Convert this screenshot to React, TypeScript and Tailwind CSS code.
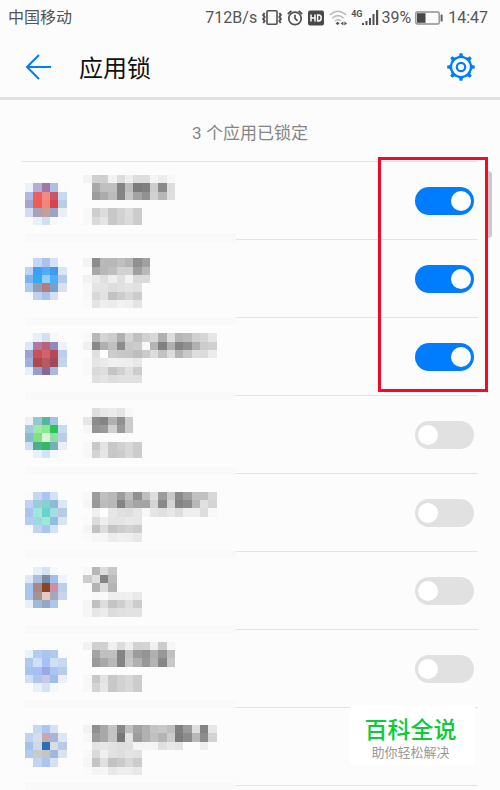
import React from "react";

const CELL = 25 / 3;
const LIST_TOP = 162;
const ROW_HEIGHT = 78;

type AppRow = {
  label: string;
  locked: boolean;
  iconRow: number;
  textRow: number;
  bandRow: number;
  icon: string[];
  text: string[];
};

// Censored rows: icons are hex colours, captions are grey levels, "--" is an empty cell.
const apps: AppRow[] = [
  {
    label: "应用 1", locked: true, iconRow: 22, textRow: 21, bandRow: 28,
    icon: [
      "ecf2fa b2aed4 a3779f aebfe6 fafbfd",
      "b0bae0 ea6060 f08c86 c95565 c8daf0",
      "a4a6d0 f05a50 f0857a d8444a bacde6",
      "cddcf2 a8a2b8 c49e98 9aa4c8 eaeff5",
      "-- e8f0fa d0e0f4 f6f9fc --",
    ],
    text: [
      "f3 d0 d0 f2 dd ee dd dd f5 ec f8",
      "-- a8 c0 c0 84 bc 7c 80 cc 8a dd",
      "-- 9c ab ba 84 c6 a4 92 d2 b8 de",
      "",
      "f8 ce dc c8 d2 dc cc",
      "f8 da e4 c8 d2 da cc",
    ],
  },
  {
    label: "应用 2", locked: true, iconRow: 31, textRow: 31, bandRow: 38,
    icon: [
      "fafbfd c5d7f2 aac3ea d6e2f4 --",
      "bed3f2 3f9ff4 52aaf8 4698ea dae5f5",
      "7db2ea 2eacf6 8fd0fa 4aaff4 b6cae6",
      "b0c9ee 949bb2 b07c80 7c9fca d9e1ee",
      "fafbfd bfd2f0 abc3ea d4e0f3 --",
    ],
    text: [
      "f3 8c b8 b8 c0 b6 90 a0",
      "-- a8 b8 be d2 d2 a0 b8",
      "f2 eb df ee e0 f3 da da",
      "f8 e4 e4 dd e1 e4 e1",
      "f8 d8 e2 c2 cc d8 cc",
      "fa e4 ee ec f2 f0 e4",
    ],
  },
  {
    label: "应用 3", locked: true, iconRow: 40, textRow: 40, bandRow: 47,
    icon: [
      "-- e8eff9 d2e1f4 f5f8fc --",
      "dce7f5 b07a9e b9607c 9388b6 eef2f8",
      "9da3d0 ca5058 d0646a b84656 bacfeb",
      "a2b1dc b04852 b45a60 9c4a5e c6d4e8",
      "e8effa 969eca 866a96 acb9de --",
    ],
    text: [
      "f9 b8 d4 cc b0 d4 c0 d0 d8 b0 dd b6 bc d0 d6 e6",
      "f0 88 b0 c0 8c c8 cc f8 b4 80 b0 84 90 b0 cc d0",
      "-- e0 fe cc c8 c6 be ca dc c2 dc b4 c8 dd dc ec",
      "f9 e6 ea f0 ee ee e8",
      "f9 da de c4 d0 e0 cc",
      "-- e0 e4 dd e0 e0 e0",
    ],
  },
  {
    label: "应用 4", locked: false, iconRow: 50, textRow: 49, bandRow: 56,
    icon: [
      "ecf2f8 96c8d0 58b49c a4c6e2 fafbfd",
      "a4c8e0 9ee8a8 8ae890 2cc458 c9daf0",
      "88bccc 80e088 d6f5d8 92dca8 bacde8",
      "d0def5 4cb08c 34b860 74b2b8 ebeff5",
      "-- e8f0f9 d3e2f4 f5f8fb --",
    ],
    text: [
      "-- de e8 eb e4 f7",
      "e6 8c 84 b0 90 cc",
      "f6 94 9a d0 9a cc",
      "",
      "f8 c8 e4 c8 d0 d8 cc",
      "f7 d4 e6 c8 cc d8 cc",
    ],
  },
  {
    label: "应用 5", locked: false, iconRow: 59, textRow: 59, bandRow: 66,
    icon: [
      "fafbfd c4d6f3 aac5ef d5e1f4 --",
      "c0d4f2 98ccd8 88d0d0 8cbcd8 dce6f4",
      "a9c4ef a0e6dc 66d4cc a4dee0 b8cbe6",
      "b4ccf1 a0d8e0 a2e6d8 90bedc dbe3ef",
      "fafbfd c0d3f2 aac5ef d5e1f4 --",
    ],
    text: [
      "f8 9c c0 b8 9c bc 90 be de 9c c8 8a a0 c0 c0 d8",
      "f6 98 bc b8 84 b0 a4 a4 d4 8a d4 84 8c b8 e0 d4",
      "-- f0 fe e6 e0 de e6 f8 e6 e0 e8 de ee ee dd f8",
      "fa dc ee e4 e4 e8 e6",
      "f5 c2 dc c4 cc d2 cc",
      "fa f6 f6 ec f0 ee e8",
    ],
  },
  {
    label: "应用 6", locked: false, iconRow: 68, textRow: 68, bandRow: 75,
    icon: [
      "-- e8effa d4e2f5 f5f8fc --",
      "dce8f6 aabdda 7c8ca4 a2beea eff4fa",
      "a8c5ee ac8684 884424 ce8ea2 bacfeb",
      "a8c5ee a29492 e8c8c4 a4a8b8 c6d5ea",
      "e8effa a0b8d8 92a9c6 b0c6e6 --",
    ],
    text: [
      "f8 b8 dc c8",
      "cc e0 84 bc",
      "fa b4 dc b4",
      "-- f8 fa ee ee f0 e8",
      "f6 c0 dd c4 ce de cc",
      "f6 e6 ec dc e0 e2 e2",
    ],
  },
  {
    label: "应用 7", locked: false, iconRow: 78, textRow: 77, bandRow: 84,
    icon: [
      "ecf2fa b4ccf0 aac5ee b0caee fafbfd",
      "b0caee d0def8 a6c0fa d0dff6 c8d9f0",
      "a8c4ec a8bef8 9ca8e4 a8c4fa bacde6",
      "d0dff5 b0c6ec c6c8e6 a2bce6 ecf0f6",
      "-- e8f0fa d3e2f5 f6f9fc --",
    ],
    text: [
      "f2 d0 d0 f0 dc ee d2 d4 f0 cc f6",
      "-- a4 c0 c0 84 c0 9c 94 b0 98 c0",
      "-- 9a a8 b8 84 c6 b0 98 b4 88 c8",
      "",
      "f8 c8 e2 c8 d2 d8 cc",
      "f8 d4 e6 c8 d2 d8 cc",
    ],
  },
  {
    label: "应用 8", locked: false, iconRow: 87, textRow: 87, bandRow: 94,
    icon: [
      "fafbfd c4d7f3 aac5ee d6e2f4 --",
      "c0d4f2 d6dde6 c8a8b0 aab4d6 dce6f5",
      "a6c2ea ccdaea 2e6eb8 d8dde6 b8cbe6",
      "b2ccf0 c8cacc c4c4c2 a0b8da dbe3ef",
      "fafbfd c0d5f2 aac5ee d6e2f4 --",
    ],
    text: [
      "f2 90 a8 c4 88 c0 a4 b0 c4 c8 c0 80 9c de 84 e6",
      "f8 9c a8 c4 78 e2 9c b0 c0 b4 cc 7c 8c b8 8c d2",
      "-- e4 e6 e2 de e0 f4 f4 f4 e0 e8 e4 -- -- ee",
      "f9 da f0 e2 de e4 e2",
      "f6 c4 e0 c2 ca d8 cc",
      "fa f4 f6 e8 ee ee e8",
    ],
  },
];

function cells(rows: string[], x: number, y: number) {
  return rows.flatMap((line, r) =>
    line.split(" ").map((c, i) =>
      c === "--" || c === "" ? null : (
        <rect
          key={`${r}-${i}`}
          x={x + i * CELL}
          y={y + r * CELL}
          width={CELL}
          height={CELL}
          fill={"#" + (c.length === 2 ? c + c + c : c)}
        />
      )
    )
  );
}

function Mosaic({ app, index }: { app: AppRow; index: number }) {
  const top = LIST_TOP + index * ROW_HEIGHT;
  return (
    <svg
      className="h-[78px] w-[214px] shrink-0 overflow-visible"
      viewBox="22 0 214 78"
      shapeRendering="crispEdges"
      aria-hidden="true"
    >
      <rect x="25" y={app.bandRow * CELL - top} width="211" height={CELL} fill="#f9f9f9" />
      {cells(app.icon, 25, app.iconRow * CELL - top)}
      {cells(app.text, 10 * CELL, app.textRow * CELL - top)}
    </svg>
  );
}

function StatusBar() {
  return (
    <div className="flex h-9 items-center justify-between pr-3 pl-2 text-base leading-5 text-[#555]">
      <span>中国移动</span>
      <div className="flex items-center">
        <span className="mr-1">712B/s</span>
        <svg className="mr-1 h-5 w-[22px]" viewBox="0 0 22 20" fill="none" stroke="#505050" strokeWidth="1.6" aria-hidden="true">
          <rect x="6" y="2.8" width="10" height="13.4" rx="1" />
          <path d="M3.6 5l-1.4 2 1.4 2-1.4 2 1.4 2-1.4 2M18.4 5l1.4 2-1.4 2 1.4 2-1.4 2 1.4 2" strokeWidth="2" />
        </svg>
        <svg className="mr-[5px] h-5 w-4" viewBox="0 0 16 20" fill="none" stroke="#505050" strokeWidth="1.7" aria-hidden="true">
          <circle cx="8" cy="10.4" r="6.2" />
          <path d="M8 6.8v3.6l2.6 2.4M.8 6l3.6-3.2M15.2 6l-3.6-3.2" />
        </svg>
        <svg className="mr-[5px] h-5 w-4" viewBox="0 0 16 20" aria-hidden="true">
          <rect x="0" y="2.5" width="16" height="15" rx="2" fill="#484848" />
          <path d="M3 6.5v7M7 6.5v7M3 10h4M9.6 7.1v5.8h1.2q2.4 0 2.4-2.9t-2.4-2.9z" fill="none" stroke="#fcfcfc" strokeWidth="1.5" />
        </svg>
        <svg className="mr-1 h-5 w-[18px]" viewBox="0 0 18 20" fill="none" aria-hidden="true">
          <path d="M.8 7Q9-.6 17.2 7M3.2 10.2Q9 5 14.8 10.2M5.8 13.2Q9 10.6 12 12.8" stroke="#bdbdbd" strokeWidth="1.5" />
          <path d="M6.6 15.4l2-1.7 2 1.7-2 1.7z" fill="#505050" />
          <path d="M11.8 15.4l2.6-2v4zM18 15.4l-2.6-2v4z" fill="#505050" />
        </svg>
        <span className="mb-2 text-[9px] leading-3 font-bold">4G</span>
        <svg className="mr-[2px] h-5 w-[17px]" viewBox="0 0 17 20" fill="#505050" aria-hidden="true">
          <path d="M0 15h2v2H0zM3.5 13h2v4h-2zM7 10h2v7H7zM10.5 6h2v11h-2zM14 2h2.2v15H14z" />
        </svg>
        <span className="mr-1">39%</span>
        <svg className="mr-[5px] h-5 w-[28px]" viewBox="0 0 28 20" aria-hidden="true">
          <rect x=".8" y="4" width="23.4" height="12" rx="1.5" fill="none" stroke="#909090" strokeWidth="1.4" />
          <rect x="2" y="5.2" width="8.5" height="9.6" fill="#484848" />
          <rect x="25.6" y="6.5" width="2" height="7" rx=".6" fill="#606060" />
        </svg>
        <span>14:47</span>
      </div>
    </div>
  );
}

function Gear() {
  const teeth = [0, 45, 90, 135, 180, 225, 270, 315];
  return (
    <svg className="size-7" viewBox="0 0 28 28" fill="none" stroke="#007dff" aria-hidden="true">
      <circle cx="14" cy="14" r="10" strokeWidth="2.2" />
      <circle cx="14" cy="14" r="4.2" strokeWidth="2.2" />
      {teeth.map((a) => (
        <path
          key={a}
          d="M12.6.2h2.8l.4 2.2 2.4 2.2h-8.4l2.4-2.2z"
          transform={`rotate(${a} 14 14)`}
          fill="#007dff"
          stroke="none"
        />
      ))}
    </svg>
  );
}

export default function App() {
  return (
    <main className="relative min-h-screen overflow-hidden bg-[#fcfcfc] font-[Roboto,'Noto_Sans_CJK_SC',sans-serif]">
      <StatusBar />
      <header className="flex h-16 items-center border-b-3 border-[#e1e1e1] px-[25px]">
        <button type="button" aria-label="返回" className="mr-[27px]">
          <svg className="h-7 w-[27px]" viewBox="0 0 27 28" fill="none" stroke="#007dff" strokeWidth="2" aria-hidden="true">
            <path d="M26 14H2M14 2l-12 12 12 12" />
          </svg>
        </button>
        <h1 className="flex-1 pt-1 text-2xl leading-8 text-[#111]">应用锁</h1>
        <button type="button" aria-label="设置">
          <Gear />
        </button>
      </header>

      <p className="flex h-[61px] items-center justify-center pt-1 text-[17px] leading-6 text-[#858585]">3 个应用已锁定</p>

      <section className="relative">
        <ul className="mx-[22px] border-t border-[#e4e4e4]">
          {apps.map((app, i) => (
            <li key={app.label} className="flex h-[78px]">
              <Mosaic app={app} index={i} />
              <div className="flex flex-1 items-center justify-end border-b border-[#e4e4e4] pr-1">
                <input
                  type="checkbox"
                  role="switch"
                  aria-label={app.label}
                  defaultChecked={app.locked}
                  className="flex h-7 w-[59px] appearance-none items-center rounded-full bg-[#e1e1e1] px-[3px] before:size-5 before:rounded-full before:bg-white checked:justify-end checked:bg-[#007dff]"
                />
              </div>
            </li>
          ))}
        </ul>
        <div className="absolute top-[10px] right-2 h-[67px] w-[5px] rounded-r-sm bg-[#cacaca]" />
        <div className="absolute top-[-4px] right-3 h-[235px] w-[110px] border-3 border-[#f5092b]" />
      </section>

      <aside className="absolute right-[25px] bottom-[25px] flex h-[60px] w-[125px] flex-col items-center justify-center bg-white pt-2 pr-1">
        <strong className="text-[23px] leading-7 font-medium text-[#08cd36]">百科全说</strong>
        <span className="text-[13px] leading-4 text-[#999]">助你轻松解决</span>
      </aside>
    </main>
  );
}
